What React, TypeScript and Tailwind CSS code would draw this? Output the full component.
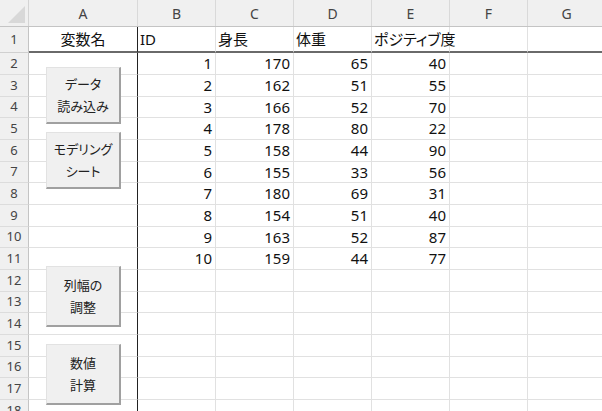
import React from 'react';

const COLS = ['A', 'B', 'C', 'D', 'E', 'F', 'G'];
const COL_W = ['w-[109px]', 'w-[78px]', 'w-[78px]', 'w-[78px]', 'w-[78px]', 'w-[78px]', 'w-[78px]'];

// row 1 holds the variable names, rows 2..18 follow at ~21.7px
const ROW_H: Record<number, string> = { 1: 'h-[26px]' };
const BASE = ['h-[22px]', 'h-[22px]', 'h-[21px]'];
for (let r = 2; r <= 18; r++) ROW_H[r] = BASE[(r - 2) % 3];

const DATA: number[][] = [
  [1, 170, 65, 40],
  [2, 162, 51, 55],
  [3, 166, 52, 70],
  [4, 178, 80, 22],
  [5, 158, 44, 90],
  [6, 155, 33, 56],
  [7, 180, 69, 31],
  [8, 154, 51, 40],
  [9, 163, 52, 87],
  [10, 159, 44, 77],
];

const HEAD = ['変数名', 'ID', '身長', '体重', 'ポジティブ度', '', ''];

const BUTTONS = [
  { pos: 'top-[67px] h-[57px]', lines: ['データ', '読み込み'] },
  { pos: 'top-[132px] h-[57px]', lines: ['モデリング', 'シート'] },
  { pos: 'top-[266px] h-[61px]', lines: ['列幅の', '調整'] },
  { pos: 'top-[344px] h-[61px]', lines: ['数値', '計算'] },
];

function Cell({ col, row, children }: { col: number; row: number; children?: React.ReactNode }) {
  const isA = col === 0;
  const isHeadRow = row === 1;
  const numeric = row >= 2 && col >= 1 && col <= 4;
  return (
    <div
      className={[
        'shrink-0 flex items-center whitespace-nowrap text-[15px] text-[#111] border-b',
        COL_W[col],
        ROW_H[row],
        isA ? 'border-r border-r-[#222] justify-center' : 'border-r border-r-[#e1e1e1]',
        isHeadRow ? 'border-b-2 border-b-[#6a6a6a]' : 'border-b-[#e1e1e1]',
        numeric ? 'justify-end pr-[3px]' : isA ? '' : 'pl-[2px]',
      ].join(' ')}
    >
      {children}
    </div>
  );
}

export default function App() {
  const rows = Object.keys(ROW_H).map(Number);
  return (
    <div className="relative w-[602px] h-[411px] overflow-hidden bg-white font-['Noto_Sans','Noto_Sans_CJK_JP',sans-serif] [font-feature-settings:'palt']">
      {/* column header strip */}
      <div className="flex h-[27px] bg-[#f0f0f0] border-b border-b-[#c4c4c4]">
        <div className="relative w-[29px] shrink-0 border-r border-r-[#d4d4d4]">
          <svg className="absolute right-[3px] bottom-[3px]" width="17" height="17" viewBox="0 0 17 17">
            <polygon points="17,0 17,17 0,17" fill="#d8d8d8" />
          </svg>
        </div>
        {COLS.map((c, i) => (
          <div
            key={c}
            className={'shrink-0 flex items-center justify-center text-[14px] text-[#444] border-r border-r-[#d9d9d9] ' + COL_W[i]}
          >
            {c}
          </div>
        ))}
      </div>

      {rows.map(r => (
        <div key={r} className="flex">
          <div
            className={[
              'w-[29px] shrink-0 flex items-center justify-center text-[13px] text-[#444] bg-[#f0f0f0] border-r border-r-[#c4c4c4] border-b',
              ROW_H[r],
              r === 1 ? 'border-b-[#d0d0d0]' : 'border-b-[#dcdcdc]',
            ].join(' ')}
          >
            {r}
          </div>
          {COLS.map((_, ci) => {
            let content: React.ReactNode = null;
            if (r === 1) content = HEAD[ci];
            else if (r - 2 < DATA.length && ci >= 1 && ci <= 4) content = DATA[r - 2][ci - 1];
            return (
              <Cell key={ci} col={ci} row={r}>
                {content}
              </Cell>
            );
          })}
        </div>
      ))}

      {/* form buttons lying over column A */}
      {BUTTONS.map(b => (
        <div
          key={b.lines[0]}
          className={
            'absolute left-[46px] w-[75px] flex flex-col items-center justify-center gap-[6px] bg-[#f0f0f0] border border-[#e2e2e2] border-r-2 border-b-2 border-r-[#a0a0a0] border-b-[#a0a0a0] text-[13px] text-[#222] leading-[16px] ' +
            b.pos
          }
        >
          {b.lines.map(l => (
            <span key={l}>{l}</span>
          ))}
        </div>
      ))}
    </div>
  );
}
